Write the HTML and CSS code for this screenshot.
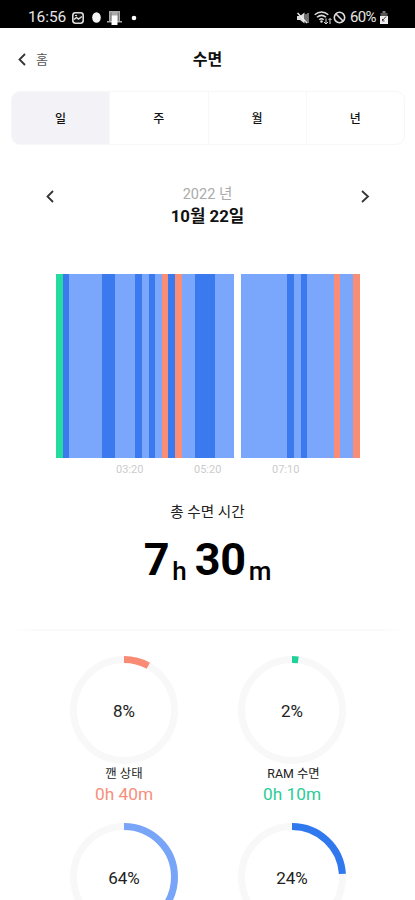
FILE: index.html
```html
<!DOCTYPE html>
<html lang="ko">
<head>
<meta charset="utf-8">
<title>수면</title>
<link rel="stylesheet" href="styles.css">
</head>
<body>
<div class="status">
  <div class="status-group">
    <span class="clock">16:56</span>
    <svg class="ic-image" width="12" height="12" viewBox="0 0 12 12"><rect x=".8" y=".8" width="10.4" height="10.4" rx="2.6" fill="#111" stroke="#ddd" stroke-width="1.6"/><path d="m2 7.500 2.500-2L6.500 7 10 4.500" fill="none" stroke="#ddd" stroke-width="1.500"/><path d="M3 3.500h2" stroke="#ddd"/></svg>
    <svg class="ic-oval" width="9" height="11" viewBox="0 0 9 11"><ellipse cx="4.5" cy="5.5" rx="4.3" ry="5.3" fill="#f4f4f4"/></svg>
    <svg class="ic-app" width="15" height="14" viewBox="0 0 15 14"><path d="M2 0h11v10h2v1.500H0V10h2z" fill="#aaa"/><path d="M4.500 4.500h6V14h-6z" fill="#fff"/><path d="M4 1.500v8.500M11.300 1.500v8.500" stroke="#555" stroke-width=".7"/></svg>
    <svg class="ic-dot" width="6" height="6" viewBox="0 0 6 6"><circle cx="3" cy="3" r="2.300" fill="#fff"/></svg>
  </div>
  <div class="status-group">
    <svg class="ic-mute" width="12" height="12" viewBox="0 0 12 12"><path d="M0 4h3l4.500-3.500v11L3 8H0z" fill="#ddd"/><path d="m.5 1 9.500 10" stroke="#eee" stroke-width="1.500"/><path d="M9 2v8M11 1v10" stroke="#bbb" stroke-width="1.200"/></svg>
    <svg class="ic-wifi" width="18" height="13" viewBox="0 0 18 13"><g fill="none" stroke="#ddd" stroke-width="1.500"><path d="M.7 3.800c4-3.600 9.500-3.600 13.600 0M3 6.300c2.800-2.400 6.200-2.400 9 0M5.300 8.700c1.400-1.200 3-1.200 4.400 0"/><path d="M12 7.500V13M10 11l2 2 2-2M16 13V7.500M14.500 9 16 7.500 17.500 9" stroke-width="1"/></g><circle cx="7.500" cy="10.500" r="1.200" fill="#ddd"/></svg>
    <svg class="ic-block" width="13" height="13" viewBox="0 0 13 13"><circle cx="6.500" cy="6.500" r="5.200" fill="none" stroke="#ddd" stroke-width="1.600"/><path d="m3 3 7 7" stroke="#ddd" stroke-width="1.600"/></svg>
    <span class="battery">60%</span>
    <svg class="ic-battery" width="10" height="13" viewBox="0 0 10 13"><path d="M3.500 0h3v2H3.500z" fill="#777"/><path d="M1.500 2h7v3h-7z" fill="#555"/><path d="M1 5h8v8H1z" fill="#eee"/><path d="m7 5.500-3.500 4M3.500 8v2h2" fill="none" stroke="#444" stroke-width="1"/></svg>
  </div>
</div>

<header class="header">
  <div class="back"><svg width="8" height="13" viewBox="0 0 8 13"><path d="M7 1 1.500 6.500 7 12" fill="none" stroke="#333" stroke-width="1.800"/></svg><span>홈</span></div>
  <h1 class="title">수면</h1>
  <div></div>
</header>

<nav class="tabs">
  <div class="tab active">일</div>
  <div class="tab">주</div>
  <div class="tab">월</div>
  <div class="tab">년</div>
</nav>

<section class="date">
  <svg class="arrow" width="8" height="13" viewBox="0 0 8 13"><path d="M7 1 1.500 6.500 7 12" fill="none" stroke="#333" stroke-width="1.800"/></svg>
  <div class="date-text">
    <div class="year">2022 년</div>
    <div class="day">10월 22일</div>
  </div>
  <svg class="arrow" width="9" height="13" viewBox="0 0 9 13"><path d="m1 1 6 5.500-6 5.500" fill="none" stroke="#333" stroke-width="1.800"/></svg>
</section>

<div class="chart">
  <i class="bar rem"></i><i class="bar deep"></i><i class="bar light w5"></i><i class="bar deep w2"></i><i class="bar light w3"></i><i class="bar deep"></i><i class="bar light"></i><i class="bar deep"></i><i class="bar light"></i><i class="bar awake"></i><i class="bar deep"></i><i class="bar awake"></i><i class="bar light w2"></i><i class="bar deep w3"></i><i class="bar light w3"></i><i class="bar"></i><i class="bar light w7"></i><i class="bar deep"></i><i class="bar light"></i><i class="bar deep"></i><i class="bar light w4"></i><i class="bar awake"></i><i class="bar light w2"></i><i class="bar awake"></i>
</div>
<div class="axis"><span>03:20</span><span>05:20</span><span>07:10</span></div>

<section class="total">
  <div class="total-label">총 수면 시간</div>
  <div class="total-value"><b>7</b><small>h</small><b class="minutes">30</b><small>m</small></div>
</section>

<hr class="divider">

<section class="stats">
  <div class="stat">
    <div class="ring">
      <svg width="108" height="108" viewBox="0 0 108 108"><circle class="track" cx="54" cy="54" r="50.500"/><circle class="arc arc-awake" cx="54" cy="54" r="50.500" pathLength="100" stroke-dasharray="8 100"/></svg>
      <span class="percent">8%</span>
    </div>
    <div class="label">깬 상태</div>
    <div class="time time-awake">0h 40m</div>
  </div>
  <div class="stat">
    <div class="ring">
      <svg width="108" height="108" viewBox="0 0 108 108"><circle class="track" cx="54" cy="54" r="50.500"/><circle class="arc arc-rem" cx="54" cy="54" r="50.500" pathLength="100" stroke-dasharray="2 100"/></svg>
      <span class="percent">2%</span>
    </div>
    <div class="label label-rem">RAM 수면</div>
    <div class="time time-rem">0h 10m</div>
  </div>
  <div class="stat">
    <div class="ring">
      <svg width="108" height="108" viewBox="0 0 108 108"><circle class="track" cx="54" cy="54" r="50.500"/><circle class="arc arc-light" cx="54" cy="54" r="50.500" pathLength="100" stroke-dasharray="64 100"/></svg>
      <span class="percent">64%</span>
    </div>
  </div>
  <div class="stat">
    <div class="ring">
      <svg width="108" height="108" viewBox="0 0 108 108"><circle class="track" cx="54" cy="54" r="50.500"/><circle class="arc arc-deep" cx="54" cy="54" r="50.500" pathLength="100" stroke-dasharray="24 100"/></svg>
      <span class="percent">24%</span>
    </div>
  </div>
</section>
</body>
</html>
```
FILE: styles.css
```css
* { box-sizing: border-box; }
html { overflow: hidden; }
body {
  margin: 0;
  height: 900px;
  overflow: hidden;
  background: #fff;
  color: #111;
  font-family: Roboto, "Noto Sans CJK KR", sans-serif;
}
svg { display: block; flex: none; }

.status {
  display: flex;
  justify-content: space-between;
  height: 28px;
  padding: 7px 26px 0 28px;
  background: #000;
  color: #e6e6e6;
}
.status-group { display: flex; align-items: center; height: 21px; }
.clock { width: 38px; font-size: 15.5px; line-height: 21px; letter-spacing: -0.1px; }
.battery { width: 27px; font-size: 15px; line-height: 21px; letter-spacing: -0.7px; margin-left: 4px; margin-right: 1px; }
.ic-image { margin-left: 6px; }
.ic-oval { margin-left: 8px; }
.ic-app { margin-left: 6px; }
.ic-dot { margin-left: 9px; }
.ic-wifi { margin-left: 5px; }
.ic-block { margin-left: 1px; }
.ic-battery { margin-left: 1px; }

.header {
  display: grid;
  grid-template-columns: 1fr auto 1fr;
  align-items: center;
  height: 63px;
  padding: 0 18px;
}
.back { display: flex; align-items: center; gap: 10px; font-size: 13px; line-height: 20px; color: #555; }
.title { margin: 0; font-size: 16px; line-height: 24px; font-weight: 700; }

.tabs {
  display: flex;
  height: 54px;
  margin: 0 10px 0 11px;
  border: 1px solid #f7f7f8;
  border-radius: 9px;
  overflow: hidden;
}
.tab {
  flex: 1;
  display: flex;
  align-items: center;
  justify-content: center;
  padding-bottom: 2px;
  font-size: 12px;
  font-weight: 500;
  border-left: 1px solid #f7f7f8;
}
.active { background: #f2f2f7; border-left: 0; }

.date {
  display: flex;
  justify-content: space-between;
  align-items: flex-start;
  height: 129px;
  padding: 38px 45px 0 46px;
}
.arrow { margin-top: 7px; }
.date-text { text-align: center; }
.year { padding-top: 1px; font-size: 14.5px; line-height: 22px; color: #aaa; }
.day { font-size: 16.8px; line-height: 20px; font-weight: 700; }

.chart { display: flex; height: 184px; margin: 0 55px 0 56px; }
.bar { flex: 1 1 0; }
.w2 { flex-grow: 2; }
.w3 { flex-grow: 3; }
.w4 { flex-grow: 4; }
.w5 { flex-grow: 5; }
.w7 { flex-grow: 7; }
.light { background: #7aa6fb; }
.deep { background: #3a7aee; }
.awake { background: #fa8d76; }
.rem { background: #26dba0; }

.axis {
  display: flex;
  gap: 51px;
  height: 20px;
  padding: 4px 0 0 116px;
  font-size: 11px;
  line-height: 15px;
  color: #ccc;
}
.axis span { width: 27px; white-space: nowrap; }

.total { height: 151px; padding-top: 22px; text-align: center; }
.total-label { padding-top: 1px; font-size: 14.6px; line-height: 23px; color: #222; }
.total-value {
  display: flex;
  justify-content: center;
  align-items: baseline;
  height: 60px;
  margin-top: 8px;
  line-height: 56px;
  color: #000;
}
.total-value b { font-size: 45px; font-weight: 700; letter-spacing: -0.3px; }
.total-value small { font-size: 26px; font-weight: 500; position: relative; top: 5px; margin-left: 3px; }
.total-value .minutes { margin-left: 8px; }

.divider { width: 391px; height: 2px; margin: 0 auto; border: 0; background: linear-gradient(90deg, #fff, #fafafa 6%, #fafafa 94%, #fff); }

.stats {
  display: grid;
  grid-template-columns: 108px 108px;
  grid-template-rows: 167px 108px;
  column-gap: 60px;
  padding: 25px 0 0 70px;
}
.stat { text-align: center; }
.ring { display: grid; place-items: center; height: 108px; }
.ring > * { grid-area: 1 / 1; }
.track, .arc { fill: none; stroke-width: 7; }
.track { stroke: #f8f8f8; }
.arc { transform: rotate(-90deg); transform-origin: 54px 54px; }
.arc-awake { stroke: #f98a73; }
.arc-rem { stroke: #20d198; }
.arc-light { stroke: #78a5f8; }
.arc-deep { stroke: #2f78ed; }
.percent { font-size: 17px; line-height: 24px; color: #222; padding-top: 2px; }
.label { padding-top: 1px; font-size: 12.4px; line-height: 18px; color: #222; }
.label-rem { padding-left: 3px; }
.time { font-size: 17.3px; line-height: 23px; }
.time-awake { color: #f5907c; }
.time-rem { color: #2dcc98; }
```
